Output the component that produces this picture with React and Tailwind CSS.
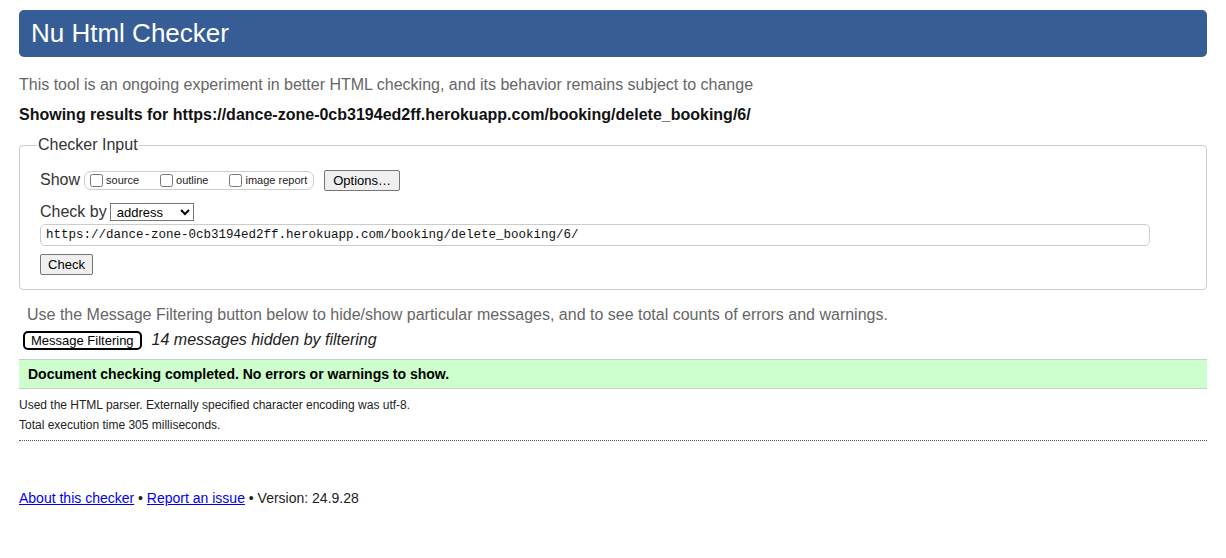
export default function App() {
  const url = 'https://dance-zone-0cb3194ed2ff.herokuapp.com/booking/delete_booking/6/';
  return (
    <div className="min-h-[558px] bg-white px-[19px] pt-[10px] text-[#222] font-['Liberation_Sans',Arial,sans-serif]">
      <h1 className="h-[47px] rounded-[5px] bg-[#365d95] pl-[12px] text-[26px] leading-[47px] text-white">Nu Html Checker</h1>

      <p className="mt-[18px] text-[16px] leading-[20px] text-[#666]">
        This tool is an ongoing experiment in better HTML checking, and its behavior remains subject to change
      </p>
      <p className="mt-[10px] text-[16px] font-bold leading-[20px] text-[#111]">Showing results for {url}</p>

      <fieldset className="mt-[10px] h-[155px] rounded-[4px] border border-[#ccc] px-[20px] pb-[12px]">
        <legend className="ml-[-3px] px-[1px] text-[16px] leading-[20px] text-[#333]">Checker Input</legend>
        <div className="mt-[13px] flex items-center">
          <span className="text-[16px] text-[#333]">Show</span>
          <div className="ml-[4px] flex h-[19px] items-center rounded-[7px] border border-[#ccc] pl-[5px] pr-[6px] text-[11px] text-[#222]">
            <input type="checkbox" className="h-[13px] w-[13px]" />
            <span className="ml-[3px] mr-[21px]">source</span>
            <input type="checkbox" className="h-[13px] w-[13px]" />
            <span className="ml-[3px] mr-[21px]">outline</span>
            <input type="checkbox" className="h-[13px] w-[13px]" />
            <span className="ml-[3px]">image report</span>
          </div>
          <button className="ml-[10px] h-[21px] rounded-[2px] border border-[#767676] bg-[#efefef] px-[8px] text-[13px] leading-[19px] text-black">Options…</button>
        </div>
        <div className="mt-[10px] flex h-[20px] items-center">
          <span className="text-[16px] text-[#333]">Check by</span>
          <select className="ml-[3px] h-[18px] w-[84px] border border-[#767676] bg-white px-[2px] text-[13px] leading-[16px] text-black" defaultValue="address">
            <option>address</option>
          </select>
        </div>
        <div className="mt-[2px] flex h-[22px] w-[1110px] items-center rounded-[5px] border border-[#ccc] px-[5px] font-['Liberation_Mono',monospace] text-[12.5px] text-[#111]">
          {url}
        </div>
        <button className="mt-[8px] h-[21px] w-[53px] rounded-[2px] border border-[#767676] bg-[#efefef] text-[13px] leading-[19px] text-black">Check</button>
      </fieldset>

      <p className="mt-[15px] pl-[8px] text-[16px] leading-[20px] text-[#666]">
        Use the Message Filtering button below to hide/show particular messages, and to see total counts of errors and warnings.
      </p>
      <div className="mt-[3px] flex items-center pl-[4px]">
        <button className="h-[19px] rounded-[5px] border-2 border-black bg-white px-[6px] text-[13px] leading-[15px] text-black">Message Filtering</button>
        <span className="ml-[10px] text-[16px] italic text-[#222]">14 messages hidden by filtering</span>
      </div>

      <div className="mt-[7px] flex h-[30px] items-center border-y border-[#ccc] bg-[#ccffcc] pl-[9px] text-[14px] font-bold text-black">
        Document checking completed. No errors or warnings to show.
      </div>
      <p className="mt-[9px] text-[12px] leading-[15px] text-[#222]">Used the HTML parser. Externally specified character encoding was utf-8.</p>
      <p className="mt-[5px] text-[12px] leading-[15px] text-[#222]">Total execution time 305 milliseconds.</p>
      <div className="mt-[7px] border-b border-dotted border-[#555]"></div>

      <p className="mt-[48px] text-[14px] leading-[18px] text-[#222]">
        <a href="#" className="text-[#0000ee] underline">About this checker</a> • <a href="#" className="text-[#0000ee] underline">Report an issue</a> • Version: 24.9.28
      </p>
    </div>
  );
}
